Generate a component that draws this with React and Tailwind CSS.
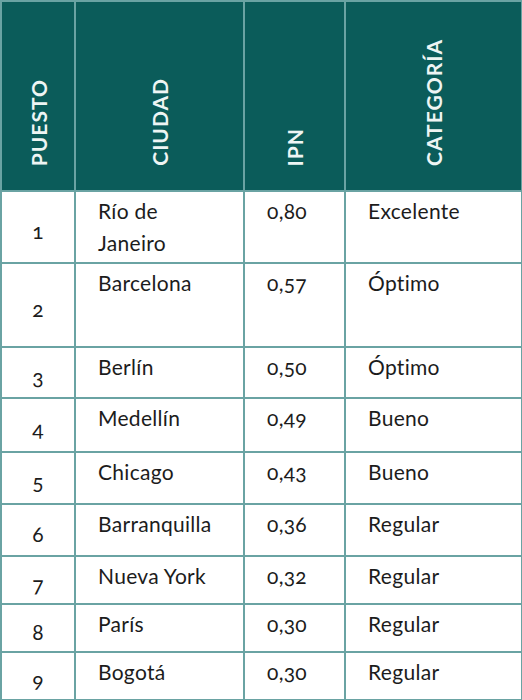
import React from 'react';

const rows = [
  { pos: '1', city: ['Río de', 'Janeiro'], ipn: '0,80', cat: 'Excelente', h: 'h-[72px]' },
  { pos: '2', city: ['Barcelona'], ipn: '0,57', cat: 'Óptimo', h: 'h-[84px]' },
  { pos: '3', city: ['Berlín'], ipn: '0,50', cat: 'Óptimo', h: 'h-[51px]' },
  { pos: '4', city: ['Medellín'], ipn: '0,49', cat: 'Bueno', h: 'h-[54px]' },
  { pos: '5', city: ['Chicago'], ipn: '0,43', cat: 'Bueno', h: 'h-[52px]' },
  { pos: '6', city: ['Barranquilla'], ipn: '0,36', cat: 'Regular', h: 'h-[52px]' },
  { pos: '7', city: ['Nueva York'], ipn: '0,32', cat: 'Regular', h: 'h-[48px]' },
  { pos: '8', city: ['París'], ipn: '0,30', cat: 'Regular', h: 'h-[48px]' },
  { pos: '9', city: ['Bogotá'], ipn: '0,30', cat: 'Regular', h: 'h-[48px]' },
];

const Head = ({ children }) => (
  <th className="border-2 border-[#6aa3a3] bg-[#0b5c5a] align-bottom pb-[24px] p-0">
    <div className="flex justify-center">
      <span className="[writing-mode:vertical-rl] rotate-180 text-[21px] font-bold tracking-[1px] text-[#eef5f4] leading-none">
        {children}
      </span>
    </div>
  </th>
);

export default function App() {
  return (
    <div className="w-[522px] h-[700px] bg-white overflow-hidden font-['Lato','Open_Sans',sans-serif] [font-variant-numeric:oldstyle-nums] text-[#1c1c1c]">
      <table className="border-collapse table-fixed w-[521px]">
        <colgroup>
          <col className="w-[74px]" />
          <col className="w-[169px]" />
          <col className="w-[101px]" />
          <col className="w-[177px]" />
        </colgroup>
        <thead>
          <tr className="h-[190px]">
            <Head>PUESTO</Head>
            <Head>CIUDAD</Head>
            <Head>IPN</Head>
            <Head>CATEGORÍA</Head>
          </tr>
        </thead>
        <tbody className="text-[21px] tracking-[0.3px]">
          {rows.map((r) => (
            <tr key={r.pos} className={r.h}>
              <td className="border-2 border-[#6aa3a3] text-center align-middle pt-[8px] p-0">{r.pos}</td>
              <td className="border-2 border-[#6aa3a3] align-top pl-[22px] pt-[3px] leading-[32px]">
                {r.city.map((c) => (
                  <div key={c}>{c}</div>
                ))}
              </td>
              <td className="border-2 border-[#6aa3a3] align-top pl-[22px] pt-[3px] leading-[32px]">{r.ipn}</td>
              <td className="border-2 border-[#6aa3a3] align-top pl-[22px] pt-[3px] leading-[32px]">{r.cat}</td>
            </tr>
          ))}
        </tbody>
      </table>
    </div>
  );
}
